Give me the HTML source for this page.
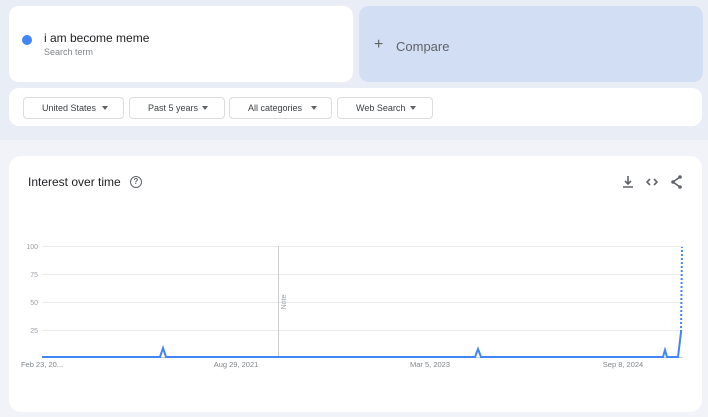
<!DOCTYPE html>
<html><head><style>
body{margin:0;width:708px;height:417px;background:#e9edf6;font-family:"Liberation Sans",sans-serif;position:relative;overflow:hidden}
.card{position:absolute;background:#fff;border-radius:10px}
.chip{position:absolute;top:97px;border:1px solid #dadce0;border-radius:4px;font-size:9px;color:#3c4043;line-height:20px;box-sizing:border-box;height:22px}
.chip span{position:absolute;top:0}
.tri{position:absolute;top:8px;width:0;height:0;border-left:3.5px solid transparent;border-right:3.5px solid transparent;border-top:4px solid #5f6368}
</style></head><body>
<div class="card" style="left:9px;top:6px;width:344px;height:76px"></div>
<div style="position:absolute;left:22px;top:35px;width:10px;height:10px;border-radius:50%;background:#4285f4"></div>
<div style="position:absolute;left:44px;top:31px;font-size:12px;color:#202124">i am become meme</div>
<div style="position:absolute;left:44px;top:47px;font-size:9px;color:#80868b">Search term</div>
<div class="card" style="left:359px;top:6px;width:344px;height:76px;background:#d2def3"></div>
<div style="position:absolute;left:374px;top:36px;font-size:16px;color:#5f6368">+</div>
<div style="position:absolute;left:396px;top:39px;font-size:13px;color:#5f6368">Compare</div>
<div class="card" style="left:9px;top:88px;width:693px;height:38px"></div>
<div class="chip" style="left:23px;width:101px"><span style="left:18px">United States</span><div class="tri" style="left:78px"></div></div>
<div class="chip" style="left:129px;width:96px"><span style="left:18px">Past 5 years</span><div class="tri" style="left:72px"></div></div>
<div class="chip" style="left:229px;width:103px"><span style="left:18px">All categories</span><div class="tri" style="left:81px"></div></div>
<div class="chip" style="left:337px;width:96px"><span style="left:18px">Web Search</span><div class="tri" style="left:72px"></div></div>
<div style="position:absolute;left:0;top:140px;width:708px;height:277px;background:#f1f3f9"></div>
<div class="card" style="left:9px;top:156px;width:693px;height:256px;border-radius:12px"></div>
<div style="position:absolute;left:28px;top:175px;font-size:12px;color:#202124">Interest over time</div>
<div style="position:absolute;left:130px;top:176px;width:10px;height:10px;border:1.3px solid #5f6368;border-radius:50%;font-size:8px;line-height:10px;text-align:center;color:#5f6368;font-weight:bold">?</div>
<svg style="position:absolute;left:0;top:0" width="708" height="417">
<g stroke="#5f6368" stroke-width="1.6" fill="none">
<path d="M628 176v8M625 181l3 3 3-3M623 187h10"/>
<path d="M650 179l-3 3 3 3M654 179l3 3-3 3"/>
<path d="M680 177l-7 5 7 5"/>
</g>
<g fill="#5f6368"><circle cx="680" cy="177" r="1.8"/><circle cx="673" cy="182" r="1.8"/><circle cx="680" cy="187" r="1.8"/></g>
<g stroke="#ebebeb" stroke-width="1"><path d="M42 246.5h641M42 274.5h641M42 302.5h641M42 330.5h641"/></g>
<path d="M278.5 246v112" stroke="#ccc"/>
<path d="M42 357.5h641" stroke="#ccc"/>
<g font-size="7" fill="#9aa0a6" text-anchor="end"><text x="38" y="249">100</text><text x="38" y="277">75</text><text x="38" y="305">50</text><text x="38" y="333">25</text></g>
<text transform="translate(286,302) rotate(-90)" font-size="7" fill="#9aa0a6" text-anchor="middle">Note</text>
<g font-size="7.5" fill="#80868b" text-anchor="middle"><text x="42" y="367">Feb 23, 20...</text><text x="236" y="367">Aug 29, 2021</text><text x="430" y="367">Mar 5, 2023</text><text x="623" y="367">Sep 8, 2024</text></g>
<path d="M42 357H160L163 348L166 357H475L478 349L481 357H663L665 350L667 357H678L681 332" stroke="#4285f4" stroke-width="2" fill="none"/>
<path d="M681 332L682 247" stroke="#4285f4" stroke-width="2" stroke-dasharray="2 2" fill="none"/>
</svg>
</body></html>
